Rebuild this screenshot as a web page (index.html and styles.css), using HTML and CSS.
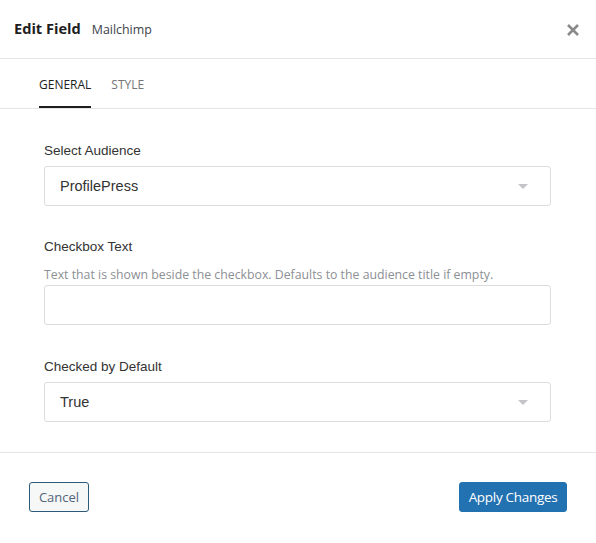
FILE: index.html
```html
<!DOCTYPE html>
<html>
<head>
<meta charset="utf-8">
<link rel="stylesheet" href="styles.css">
</head>
<body>
<div class="modal">
  <div class="header">
    <div class="title"><span class="title-main">Edit Field</span><span class="title-sub">Mailchimp</span></div>
    <span class="close" aria-label="Close">
      <svg width="14" height="14" viewBox="0 0 14 14"><path d="M2 2 L12 12 M12 2 L2 12" stroke="#8a8a8a" stroke-width="2.6" stroke-linecap="butt"/></svg>
    </span>
  </div>
  <div class="tabs">
    <div class="tab active">GENERAL</div>
    <div class="tab">STYLE</div>
  </div>
  <div class="content">
    <div class="group">
      <div class="label">Select Audience</div>
      <div class="select"><span>ProfilePress</span><span class="arrow"></span></div>
    </div>
    <div class="group">
      <div class="label">Checkbox Text</div>
      <div class="desc">Text that is shown beside the checkbox. Defaults to the audience title if empty.</div>
      <div class="input"></div>
    </div>
    <div class="group group-last">
      <div class="label">Checked by Default</div>
      <div class="select"><span>True</span><span class="arrow"></span></div>
    </div>
  </div>
  <div class="footer">
    <button class="btn cancel">Cancel</button>
    <button class="btn apply">Apply Changes</button>
  </div>
</div>
</body>
</html>
```

FILE: styles.css
```css
html, body { margin: 0; padding: 0; background: #fff; }
body { font-family: "Open Sans", "Liberation Sans", sans-serif; color: #1e1e1e; }
.modal { width: 596px; }
.header {
  height: 59px;
  border-bottom: 1px solid #e6e6e6;
  display: flex;
  align-items: center;
  justify-content: space-between;
  padding: 0 16px 0 14px;
  box-sizing: border-box;
}
.title { display: flex; align-items: baseline; gap: 11px; margin-bottom: 3px; }
.title-main { font-size: 14.6px; font-weight: 700; color: #1e1e1e; }
.title-sub { font-size: 12.4px; color: #3c434a; }
.close { display: flex; margin-top: 2px; }
.tabs {
  display: flex;
  gap: 20px;
  padding-left: 39px;
  height: 50px;
  border-bottom: 1px solid #e6e6e6;
  box-sizing: border-box;
}
.tab {
  font-size: 12px;
  color: #757575;
  display: flex;
  align-items: center;
  padding-top: 4px;
  border-bottom: 2px solid transparent;
  box-sizing: border-box;
}
.tab.active { color: #1e1e1e; border-bottom-color: #1e1e1e; }
.content {
  padding: 33px 45px 30px 44px;
  display: flex;
  flex-direction: column;
  gap: 32px;
  border-bottom: 1px solid #e6e6e6;
}
.group { display: flex; flex-direction: column; }
.label {
  font-family: "Liberation Sans", Arial, sans-serif;
  font-size: 13.5px;
  line-height: 18px;
  color: #333;
  margin-bottom: 6px;
}
.desc {
  font-size: 12.3px;
  line-height: 18px;
  color: #8c8f94;
  margin-top: 4px;
  margin-bottom: 1px;
}
.group-last { margin-top: 1px; }
.select, .input {
  height: 40px;
  box-sizing: border-box;
  border: 1px solid #dcdcde;
  border-radius: 3px;
  display: flex;
  align-items: center;
  justify-content: space-between;
  padding: 0 22px 0 15px;
  font-family: "Liberation Sans", Arial, sans-serif;
  font-size: 14.5px;
  color: #333;
}
.arrow {
  width: 0; height: 0;
  border-left: 5px solid transparent;
  border-right: 5px solid transparent;
  border-top: 5px solid #c3c4c7;
}
.footer {
  display: flex;
  justify-content: space-between;
  padding: 29px 29px 30px;
}
.btn {
  height: 30px;
  font-family: "Open Sans", sans-serif;
  font-size: 13px;
  border-radius: 3px;
  padding: 0;
  white-space: nowrap;
  box-sizing: border-box;
}
.cancel {
  width: 60px;
  background: #f6f7f7;
  border: 1px solid #2c5a78;
  color: #50647a;
}
.apply {
  width: 108px;
  background: #2271b1;
  border: 1px solid #2271b1;
  color: #fff;
  font-size: 13.5px;
  letter-spacing: -0.3px;
}
```
